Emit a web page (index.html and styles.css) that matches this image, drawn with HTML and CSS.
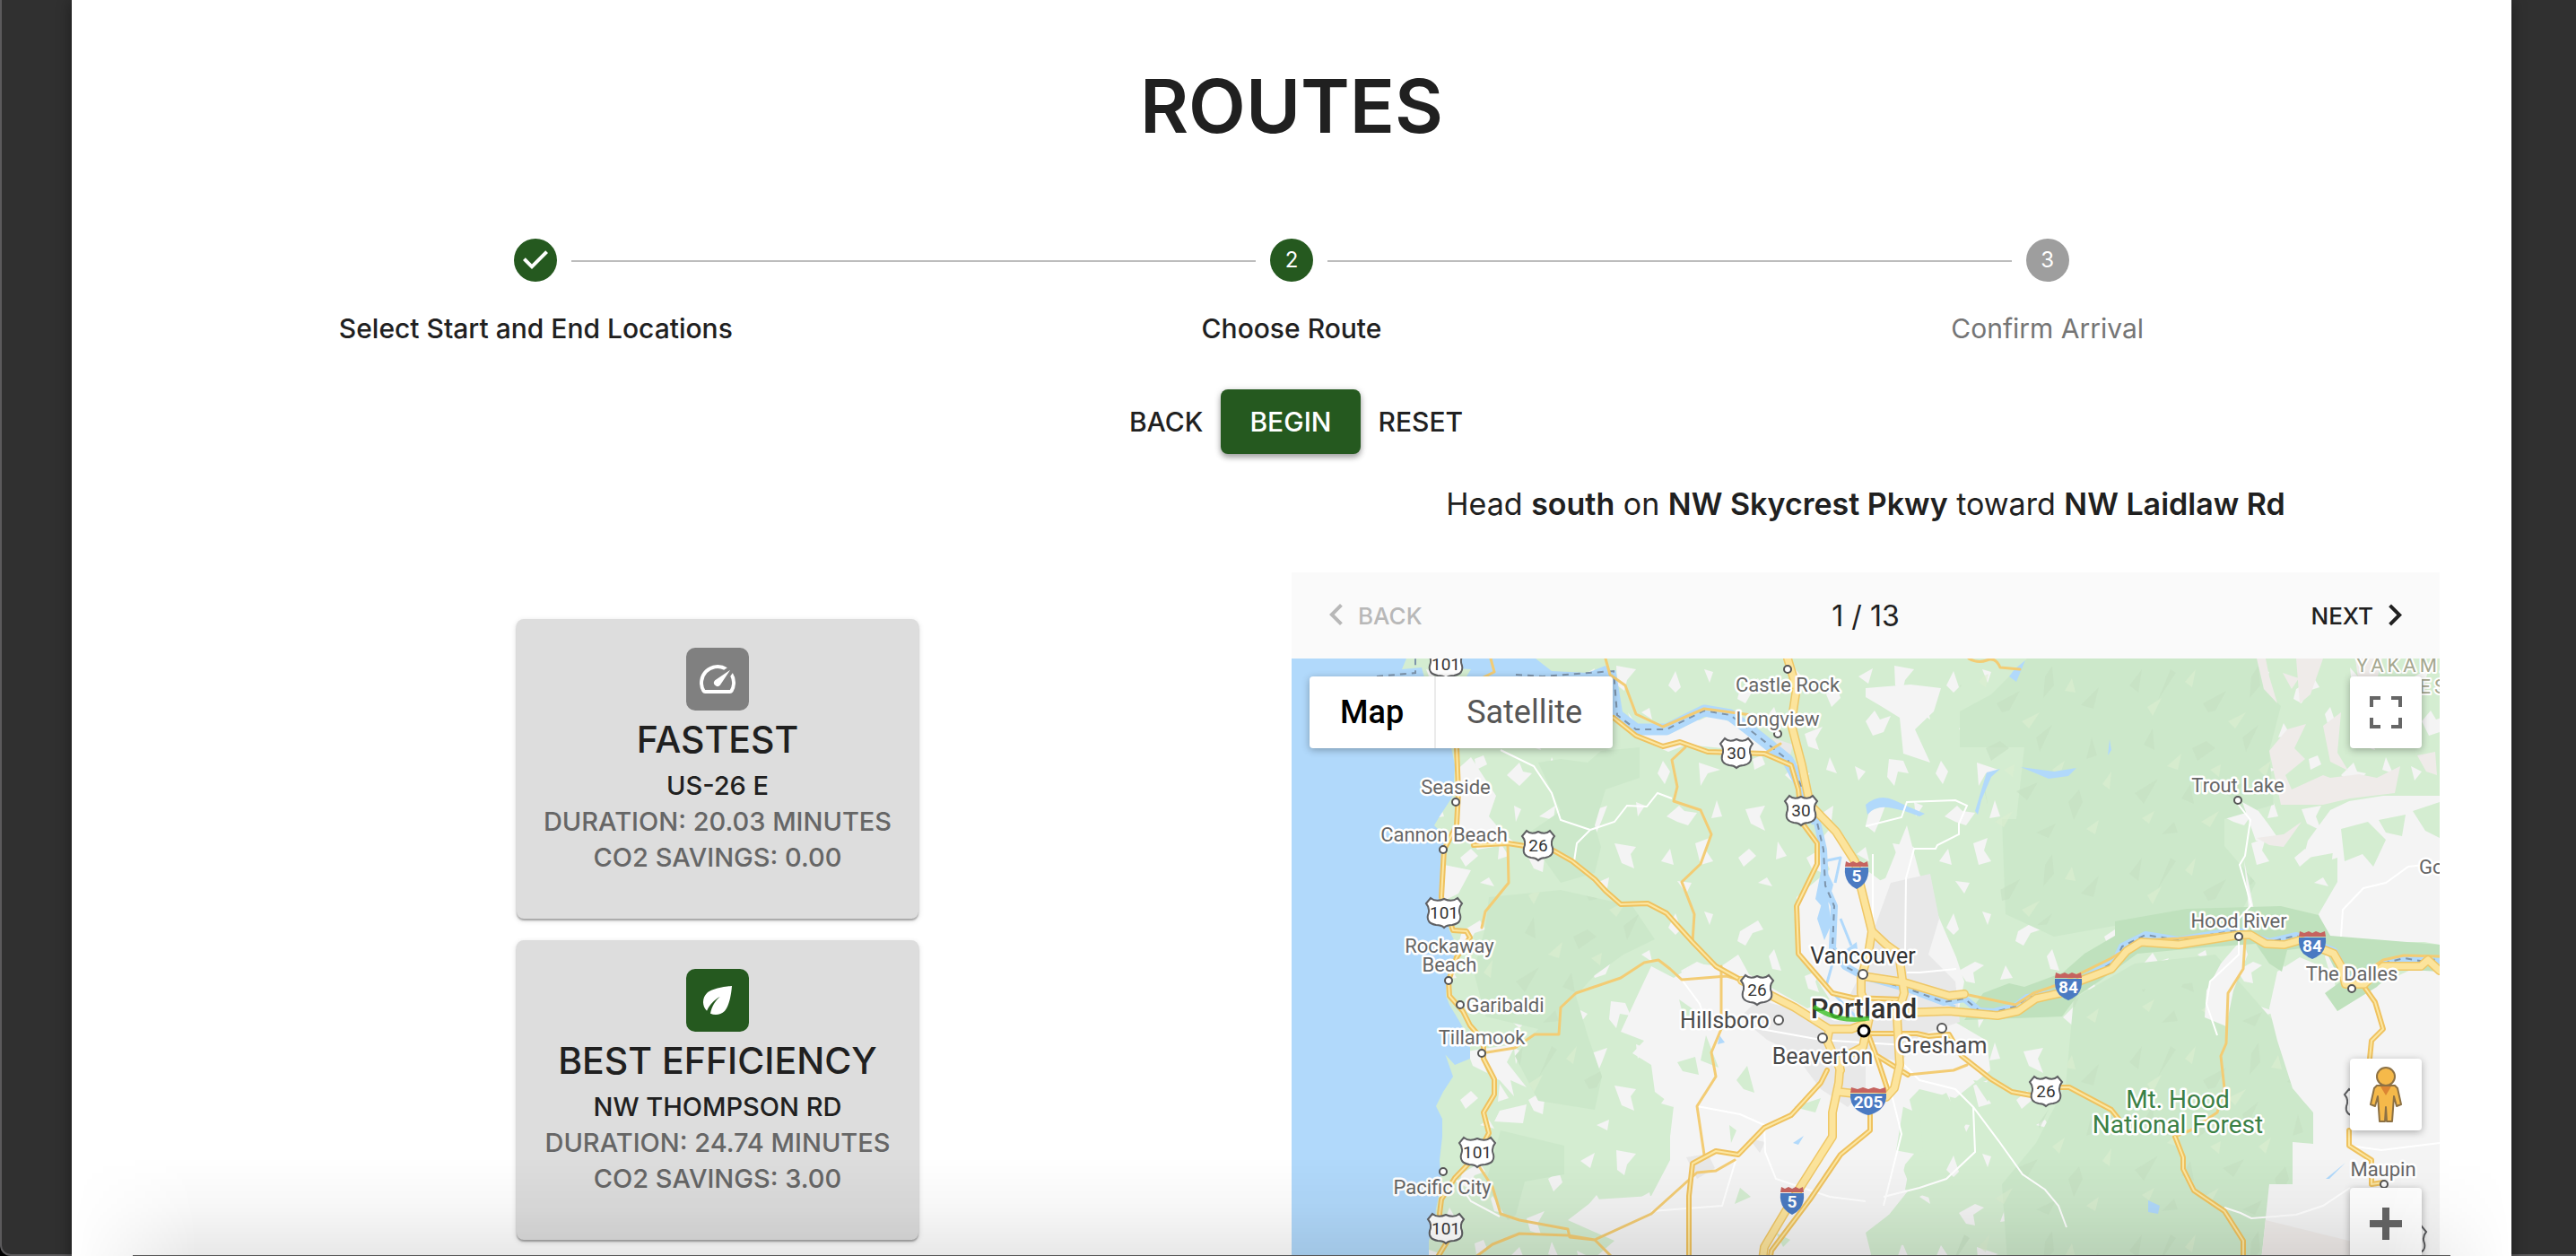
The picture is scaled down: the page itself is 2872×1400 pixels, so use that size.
FILE: index.html
```html
<!DOCTYPE html>
<html lang="en">
<head>
<meta charset="utf-8">
<meta name="viewport" content="width=device-width, initial-scale=1">
<title>Routes</title>
<link rel="stylesheet" href="styles.css">
</head>
<body>
<div class="window">
<main class="sheet">
  <h1 class="title">ROUTES</h1>

  <ol class="stepper">
    <li class="step">
      <svg class="step-icon" viewBox="0 0 24 24" aria-hidden="true"><path d="M12 0a12 12 0 1 0 0 24 12 12 0 0 0 0-24zm-2 17l-5-5 1.4-1.4 3.6 3.6 7.6-7.6L19 8l-9 9z"/></svg>
      <span class="step-label">Select Start and End Locations</span>
    </li>
    <li class="step" aria-current="step">
      <span class="step-num">2</span>
      <span class="step-label">Choose Route</span>
    </li>
    <li class="step step-next">
      <span class="step-num">3</span>
      <span class="step-label">Confirm Arrival</span>
    </li>
  </ol>

  <div class="actions">
    <button class="btn" type="button">BACK</button>
    <button class="btn btn-primary" type="button">BEGIN</button>
    <button class="btn" type="button">RESET</button>
  </div>

  <div class="content">
    <section class="routes">
      <button class="route" type="button">
        <span class="route-icon"><svg viewBox="0 0 24 24" aria-hidden="true"><path d="M20.38 8.57l-1.23 1.85a8 8 0 0 1-.22 7.58H5.07A8 8 0 0 1 15.58 6.85l1.85-1.23A10 10 0 0 0 3.35 19a2 2 0 0 0 1.72 1h13.85a2 2 0 0 0 1.74-1 10 10 0 0 0-.27-10.44zm-9.79 6.84a2 2 0 0 0 2.83 0l5.66-8.49-8.49 5.66a2 2 0 0 0 0 2.83z"/></svg></span>
        <span class="route-title">FASTEST</span>
        <span class="route-line">US-26 E</span>
        <span class="route-line route-meta">DURATION: 20.03 MINUTES</span>
        <span class="route-line route-meta">CO2 SAVINGS: 0.00</span>
      </button>
      <button class="route" type="button">
        <span class="route-icon route-icon-eco"><svg viewBox="0 0 24 24" aria-hidden="true"><path d="M6.05 8.05c-2.73 2.73-2.73 7.15-.02 9.88 1.47-3.4 4.09-6.24 7.36-7.93-2.77 2.34-4.71 5.61-5.39 9.32 2.6 1.23 5.8.78 7.95-1.37C19.43 14.47 20 4 20 4S9.53 4.57 6.05 8.05z"/></svg></span>
        <span class="route-title">BEST EFFICIENCY</span>
        <span class="route-line">NW THOMPSON RD</span>
        <span class="route-line route-meta">DURATION: 24.74 MINUTES</span>
        <span class="route-line route-meta">CO2 SAVINGS: 3.00</span>
      </button>
    </section>

    <section class="directions">
      <p class="instruction">Head <b>south</b> on <b>NW Skycrest Pkwy</b> toward <b>NW Laidlaw Rd</b></p>
      <nav class="pager">
        <button class="pager-btn" type="button" disabled><svg viewBox="0 0 24 24" aria-hidden="true"><path d="M15.41 16.09l-4.58-4.59 4.58-4.59L14 5.5l-6 6 6 6z"/></svg>BACK</button>
        <span class="pager-count">1 / 13</span>
        <button class="pager-btn pager-next" type="button">NEXT<svg viewBox="0 0 24 24" aria-hidden="true"><path d="M8.59 16.34l4.58-4.59-4.58-4.59L10 5.75l6 6-6 6z"/></svg></button>
      </nav>

      <div class="map">
        <svg class="map-canvas" viewBox="0 0 1280 700" role="img" aria-label="Map of Portland and surroundings">
          <defs>
            <pattern id="clearings" width="310" height="270" patternUnits="userSpaceOnUse">
              <g fill="#f4f4f4">
                <path d="M12 20l16-9-5 17zM52 8l22 4-10 12-3 12-8-6zM110 30l8-16 6 18-6 6zM150 12l10 3-4 12zM190 34l20-12 6 10-12 4-8 14-9-5zM250 10l14 16-12 4zM286 40l12-8 4 12-10 10z"/>
                <path d="M20 70l10-12 6 10 12-4-8 18-12 4zM80 60l9-5 3 13zM124 78l18-10 10 4-12 8 2 12-10-2zM176 72l8 14-14 2zM222 62l6-8 8 24-10-2zM262 84l20-8-8 14 4 12-12-4z"/>
                <path d="M8 120l12 6-8 10zM46 112l16 2 6 14-12-2-4 16-8-10zM98 128l6-14 8 12-6 14zM144 116l24 8-14 4-8 14zM204 112l10-4 4 10-12 6zM240 130l14-14 4 10 10 2-14 14zM290 110l8 18-12-4z"/>
                <path d="M24 170l18-6-6 16-6 14-10-8zM74 160l10 4-8 12zM108 176l14-12 6 6 14 2-10 14-12-4zM164 158l6 18-12 2zM196 168l22-4-6 12 6 16-16-8zM248 164l8 4-6 14zM276 176l18-12-2 16z"/>
                <path d="M10 218l10-8 4 16zM50 206l24 4-6 8 4 16-14-6zM102 226l10-14 4 18zM140 206l16-6-4 14 8 12-14 4zM188 222l12-10 8 8-14 12zM232 204l10 16-12 4zM264 222l20-12 8 8-10 4-2 16-10-4zM30 250l14-6-2 12zM120 248l16 2-6 12zM210 250l10-6 6 10z"/>
              </g>
            </pattern>
            <pattern id="relief" width="230" height="210" patternUnits="userSpaceOnUse">
              <path fill="#c5e0c2" opacity=".6" d="M14 30l14-18-4 26zM60 12l6 4-20 30zM96 50l26-14-12 22-8 2zM150 20l8-12 2 22-12 14zM190 52l20-20-6 24zM30 96l10-18 2 24zM84 100l16-8 10 8-20 14zM140 88l18-14-14 30zM196 112l6-24 6 20zM20 150l26-16-16 28zM72 156l10-16 4 22zM118 148l24-10-12 20zM176 160l12-14 4 14-10 20zM50 196l14-14 4 12zM140 194l22-10-8 16z"/>
              <path fill="#dcefd0" opacity=".6" d="M34 54l16-10-10 20zM76 26l12-14-4 20zM124 70l20-10-12 18zM172 36l8-14 4 16zM56 120l16-14-4 18zM104 124l12-6-2 14zM158 124l14-10-6 18zM214 140l10-14-2 20zM28 178l14-8-6 14zM94 182l20-12-10 18zM196 190l14-10-4 16z"/>
            </pattern>
            <g id="us-shield"><path d="M-13-16Q-8-11 0-15Q8-11 13-16L18-10Q13-4 16 3Q18 12 8 14Q3 14 0 17Q-3 14-8 14Q-18 12-16 3Q-13-4-18-10Z" fill="#fff" stroke="#5f6063" stroke-width="2"/></g>
            <g id="us-shield-wide"><path d="M-15-16Q-9-11 0-15Q9-11 15-16L20-10Q15-4 18 3Q20 12 9 14Q3 14 0 17Q-3 14-9 14Q-20 12-18 3Q-15-4-20-10Z" fill="#fff" stroke="#5f6063" stroke-width="2"/></g>
            <g id="interstate"><path d="M-12-15l4 2 4-2 4 2 4-2 4 2 4-2 1 6h-26z" fill="#c5635f"/><path d="M-13-8h26Q14 2 9 9Q5 14 0 16Q-5 14-9 9Q-14 2-13-8Z" fill="#4a7ac2"/></g>
            <g id="interstate-wide"><path d="M-14-15l5 2 5-2 4 2 4-2 5 2 5-2 1 6h-30z" fill="#c5635f"/><path d="M-15-8h30Q16 3 10 10Q5 14 0 16Q-5 14-10 10Q-16 3-15-8Z" fill="#4a7ac2"/></g>
            <g id="interstate-xwide"><path d="M-19-15l7 2 6-2 6 2 6-2 7 2 6-2 1 6h-40z" fill="#c5635f"/><path d="M-20-8h40Q21 3 13 10Q6 15 0 16Q-6 15-13 10Q-21 3-20-8Z" fill="#4a7ac2"/></g>
            <g id="roads-major">
              <path d="M553 0L563 33 557 73 569 119 578 163 607 193 628 226 635 256 647 304 643 329 635 356 635 373 645 396 637 433 612 446 610 473 603 506 603 533 561 599 527 656 521 700"/>
              <path d="M647 304L663 319 677 329 683 373 675 399 678 453 672 479 663 489 610 483"/>
              <path d="M643 396L707 394 733 393 787 398 810 393 830 379 857 373 880 359 914 346 931 326 947 316 989 319 1057 308 1069 308 1086 318 1107 319 1124 314 1162 329 1170 343 1175 363 1196 363 1217 343 1259 343 1267 336 1280 348"/>
              <path d="M637 354L683 361 733 376 750 374M502 359L561 389 599 413 624 413 637 408M599 416L597 426 612 459"/>
            </g>
            <g id="roads-mid">
              <path d="M203 208L241 206 292 214 313 226 338 246 350 259 367 274 397 273 418 284 447 316 473 343 502 359"/>
              <path d="M643 418L697 418 710 421 733 419 747 443 780 469 803 483 830 488M855 478L867 478 914 503 922 513M985 533L994 556 994 569 1006 593 1040 616 1061 649 1061 700"/>
              <path d="M1196 366L1208 383 1217 413 1204 426 1202 446M1179 526L1179 543 1204 559 1204 586 1217 584"/>
              <path d="M184 99L186 149 184 186 170 213 167 266 180 303 195 304 199 311 184 333 175 359 176 376 191 393 199 409 214 426 214 446 226 469 226 486 214 506 220 529 207 553 182 579 167 603 165 619 174 649 160 672"/>
              <path d="M359 66L384 86 414 98 433 93 464 104 527 106 557 119 565 146 569 183 586 206 586 229 563 276 565 329 603 373 625 378 680 380"/>
              <path d="M597 459L590 473 557 509 527 523 498 553 473 549 447 563 443 599 443 700M645 509L645 526 612 553 578 603 535 660 528 700M643 419L653 446 665 482M653 443L687 464"/>
            </g>
            <g id="roads-minor">
              <path d="M218 439L249 434 271 419 298 419 300 389 317 373 367 356 393 339 409 336 422 346 435 358 485 354 502 359"/>
              <path d="M439 99L424 113 430 143 426 159 456 169 468 196 456 229 435 249 449 285 447 316M479 343L479 413 468 439 473 466 452 499 460 553"/>
              <path d="M494 559L473 571 452 573 401 619 338 648 308 643 254 641 224 653 204 668M207 563L224 589 233 619 254 626 308 636 310 645 338 648 370 680"/>
              <path d="M1063 313L1061 346 1044 373 1042 429 1036 443 1040 479 1032 506 1002 526 985 533M750 374L807 386 827 373 853 364 914 334 947 314 989 312 1045 306M1196 350L1217 336 1240 331 1280 332"/>
              <path d="M687 464L738 459 753 453M241 206L242 250 216 282 212 300M350 0L355 18 372 30 384 62 414 76 460 56 520 64M222 0L226 15 200 28M545 95L527 106"/>
              <path d="M755 0Q765 6 775 2T790 10L812 12"/>
            </g>
          </defs>

          <rect width="1280" height="700" fill="#d4edd1"/>
          <rect width="1280" height="700" fill="url(#clearings)"/>

          <g fill="#cce8ca">
            <path d="M275 116L300 112 330 116 345 103 388 99 388 133 350 146 338 186 345 210 338 239 300 250 282 225 262 196 300 170z"/>
            <path d="M220 266L300 258 380 276 405 313 370 330 338 353 317 376 330 420 346 466 338 503 275 493 249 443 275 413 216 399 203 349 216 299z"/>
            <path d="M233 526L304 543 304 575 260 583 250 620 241 626 216 586z"/>
            <path d="M820 0L1078 0 1084 34 1103 53 1090 103 1095 163 1040 179 1040 209 1075 250 1060 280 990 285 850 310 796 285 792 179 808 179 817 99 745 99 745 59 780 40z"/>
            <path d="M872 379L940 340 1030 330 1099 409 1116 479 1139 506 1139 541 1116 539 1116 586 1090 586 1078 700 800 700 792 586 830 540 863 476z"/>
          </g>
          <g fill="url(#relief)">
            <path d="M220 266L300 258 380 276 405 313 338 353 317 376 346 466 338 503 275 493 249 443 203 349z"/>
            <path d="M745 30L820 0 1078 0 1103 53 1095 163 1040 209 1075 250 990 285 796 300 780 180z"/>
            <path d="M872 379L1099 349 1116 479 1139 541 1078 700 700 700 760 620 863 476z"/>
          </g>

          <g fill="#f4f4f4">
            <path d="M563 266L600 235 586 206 600 190 628 226 660 250 686 186 700 240 712 266 741 333 750 360 741 406 775 426 779 459 740 490 700 480 682 499 674 549 690 590 650 640 640 700 350 700 338 668 360 649 308 626 338 603 401 599 422 559 422 533 426 499 405 483 401 453 380 440 393 426 367 416 384 379 401 343 426 356 450 340 479 343 498 330 510 352 540 370 575 390 600 380 565 326z"/>
            <path d="M182 126L200 110 228 153 220 176 237 196 250 206 207 213 186 186z"/>
            <path d="M640 33L690 29 724 33 716 59 695 79 712 116 682 106 678 66 657 53 640 43zM375 60L384 88 420 104 440 96 520 104 550 118 552 100 500 76 470 62 420 84 390 82z"/>
            <path d="M170 230L200 236 186 262 170 270zM214 435L250 430 240 450 262 478 244 470 248 488 232 470 222 466zM232 504L262 497 258 518 226 516z"/>
            <path d="M1217 153L1179 159 1158 169 1133 203 1128 223 1166 216 1166 249 1145 285 1152 316 1263 316 1280 319 1280 153z"/>
            <path d="M1099 426L1090 390 1099 349 1124 333 1162 349 1166 393 1213 363 1250 346 1280 349 1280 700 1078 700 1090 586 1116 586 1116 539 1139 541 1139 506 1116 479z"/>
            <path d="M1036 340L1020 370 1018 400 1042 410 1050 370 1066 330 1060 312zM1060 160L1075 203 1103 205 1090 186 1078 170zM1062 225l12 60-6 4z"/>
          </g>
          <g fill="#efebe9">
            <path d="M1076 0L1084 34 1099 50 1090 20 1086 0zM1105 16l18 6-8 12zM1120 0h30l-14 40-12 10zM1186 0h30l-10 40-16-10zM1110 79L1131 73 1118 100 1130 112 1108 130 1115 146 1150 130 1158 133 1190 129 1210 133 1236 120 1230 150 1180 156 1150 163 1103 163 1090 103zM1150 75l20-15-4 45 12 20-20-10zM1076 200l30-4 20-14-20 28-16-2zM1255 108l20-4 2 26-12-4z"/>
            <path d="M1086 626L1179 649 1230 656 1230 700 1078 700z"/>
          </g>
          <g fill="#d4edd1">
            <path d="M1170 190l30-8 20 20-14 30-12-14-20 8zM1212 180l30-6-4 24-18-4zM1250 170l30-10v40l-16-8z"/>
            <path d="M700 500l30-16 10 20 24-6-14 24 10 26-24-4-16 24-16-20zM760 470l26 4-10 20zM690 560l26-10 8 24 20 8-30 20-30-10zM640 640l26-20 20 16-10 30-28 6zM560 500l30-10-6 16z"/>
            <path d="M432 380l20 14-14 10zM462 420l14 36-20-8zM430 450l20-6 4 20-18-4zM496 470l12-16 8 30-12-4zM500 590l12 10-18 8zM488 520l8 6-6 14zM540 640l16 8-8 8z"/>
          </g>
          <path fill="#bfe1bd" d="M750 403L771 373 800 362 817 366 860 350 884 329 918 309 918 293 998 279 1103 276 1145 286 1158 309 1280 319 1280 349 1230 346 1210 366 1166 393 1152 373 1170 360 1150 320 1110 325 1104 349 1090 340 1075 318 1019 322 943 329 900 360 876 376 859 399z"/>
          <g fill="#e8e8e8">
            <path d="M668 250L712 240 722 290 710 330 740 360 745 405 700 420 680 450 640 440 640 480 620 500 590 480 560 440 530 425 500 400 520 380 590 400 620 380 640 340 650 300z"/>
            <path d="M440 556l24-4 8 16-20 12zM535 88l24 8-4 16zM510 535l18 4-6 12z"/>
          </g>

          <g fill="#b1d9fb">
            <path d="M0 0H128L123 12 145 10 150 28 178 40 178 99 182 119 180 153 165 176 159 186 169 196 170 219 167 266 176 303 182 316 181 336 173 359 172 376 176 386 188 406 199 426 199 446 182 453 170 440 166 426 180 466 169 483 161 499 168 513 168 533 165 559 167 586 161 613 159 633 153 649 153 700H0z"/>
            <path d="M160 0L165 10 200 12 190 28 240 30 320 26 359 19 350 8 330 16 290 14 272 0z"/>
            <path d="M800 20l6-8 12-10-10 24zM640 163Q655 150 672 158T706 173L700 176Q680 168 665 166T642 174zM762 170L775 127 790 123 780 132 769 158 765 174zM813 121L850 126 875 122 866 131 844 134zM912 90l2 12-4 6z"/>
            <path d="M592 228l12 24-8 30-12-14zM586 290l10-34 6 40-8 18zM616 326l14-10 2 18zM955 604l13 6-2 9-11-2zM1153 580l22-18-18 18zM477 420l6 8-8 2zM559 540l12-8-6 10z"/>
          </g>
          <g fill="none" stroke="#b1d9fb" stroke-linejoin="round">
            <path stroke-width="13" d="M355 14L363 63 384 79 418 79 460 58 489 63 523 89 553 113 574 153 586 183"/>
            <path stroke-width="8" d="M586 183L593 213 595 253 605 276 603 323 617 343 637 354 690 369 727 383 750 379 767 393 783 394 807 388 820 378 851 373 884 356 918 338 926 321 952 308 989 314 1053 303 1090 316 1120 309 1162 326 1178 356M1217 340L1240 334 1280 338"/>
            <path stroke-width="3" d="M593 226L612 222 606 250M603 340L596 365 620 390 640 410 640 440M612 290L624 320M700 372L740 388"/>
          </g>
          <g class="border-line">
            <path d="M95 20L138 16 138 0M250 18L280 20 359 14 363 63 384 79 418 79 460 58 489 63 523 89 553 113 574 153 586 183 593 213 595 253 605 276 603 323 617 343 637 354 690 369 727 383 750 379 767 393 783 394 807 388 820 378 851 373 884 356 918 338 926 321 952 308 989 314 1053 303 1090 316 1120 309 1162 326 1178 350M1217 340L1240 334 1265 338 1280 334"/>
          </g>

          <g fill="none" stroke="#fff" stroke-width="2">
            <path d="M233 102L270 120 290 150 300 180 333 191 318 206 315 226M333 191L360 182 374 164 396 165 408 150 424 156"/>
            <path d="M640 187L680 177 686 160 740 158 753 164 744 184 744 196 720 208 718 212 694 212 685 245 684 330M686 350L700 350 741 346"/>
            <path d="M1055 162L1069 180 1063 220 1057 230 1070 275 1056 290 1056 330 1024 360 1020 385 1032 420M1280 228L1245 232 1220 250 1195 256 1172 280 1170 310"/>
            <path d="M680 450L700 470 740 480 760 500 790 540 815 575 840 592 855 610 864 634M760 500L762 550 730 580 700 590 660 600M665 470L680 530 660 610"/>
            <path d="M1040 612L1058 618 1070 624 1120 620 1150 610 1180 590M1179 543L1215 548 1280 540M452 499L500 508 527 520 528 550 540 580 600 600 640 605M401 616L480 610 495 560"/>
            <path d="M435 358L455 385 460 400M479 405L590 425 700 432M182 579L200 605 232 622M648 218L648 300"/>
          </g>

          <g fill="none" stroke-linejoin="round" stroke-linecap="round">
            <use href="#roads-minor" stroke="#f3cc74" stroke-width="3"/>
            <use href="#roads-mid" stroke="#efc25f" stroke-width="6"/>
            <use href="#roads-mid" stroke="#fce7a2" stroke-width="2"/>
            <use href="#roads-major" stroke="#efc766" stroke-width="10"/>
            <use href="#roads-major" stroke="#fce49c" stroke-width="7"/>
          </g>

          <g class="shields">
            <use href="#us-shield-wide" x="172" y="5"/><text x="172" y="13">101</text>
            <use href="#us-shield" x="496" y="105"/><text x="496" y="112">30</text>
            <use href="#us-shield" x="568" y="169"/><text x="568" y="176">30</text>
            <use href="#us-shield" x="275" y="208"/><text x="275" y="215">26</text>
            <use href="#us-shield-wide" x="170" y="283"/><text x="170" y="290">101</text>
            <use href="#us-shield" x="519" y="369"/><text x="519" y="376">26</text>
            <use href="#us-shield-wide" x="207" y="550"/><text x="207" y="557">101</text>
            <use href="#us-shield-wide" x="172" y="635"/><text x="172" y="642">101</text>
            <use href="#us-shield" x="841" y="482"/><text x="841" y="489">26</text>
            <use href="#us-shield-wide" x="1194" y="496"/>
            <use href="#us-shield" x="1247" y="649"/>
          </g>
          <g class="interstates">
            <use href="#interstate" x="630" y="241"/><text x="630" y="249">5</text>
            <use href="#interstate" x="558" y="604"/><text x="558" y="612">5</text>
            <use href="#interstate-wide" x="866" y="365"/><text x="866" y="373">84</text>
            <use href="#interstate-wide" x="1138" y="319"/><text x="1138" y="327">84</text>
            <use href="#interstate-xwide" x="643" y="493"/><text x="643" y="501">205</text>
          </g>

          <g class="dots">
            <circle cx="553" cy="12" r="4"/><circle cx="542" cy="84" r="4"/><circle cx="183" cy="160" r="4"/><circle cx="169" cy="213" r="4"/>
            <circle cx="175" cy="359" r="4"/><circle cx="188" cy="386" r="4"/><circle cx="212" cy="440" r="4"/><circle cx="169" cy="572" r="4"/>
            <circle cx="1055" cy="158" r="4"/><circle cx="1056" cy="310" r="4"/><circle cx="1182" cy="368" r="4"/><circle cx="1218" cy="586" r="4"/>
            <circle cx="543" cy="403" r="5"/><circle cx="592" cy="423" r="5"/><circle cx="725" cy="412" r="5"/><circle cx="637" cy="352" r="5"/>
            <circle class="dot-main" cx="638" cy="415" r="6"/>
          </g>
          <g class="towns">
            <text x="553" y="37">Castle Rock</text>
            <text x="542" y="75">Longview</text>
            <text x="183" y="151">Seaside</text>
            <text x="170" y="204">Cannon Beach</text>
            <text x="176" y="328">Rockaway</text>
            <text x="176" y="349">Beach</text>
            <text x="238" y="394">Garibaldi</text>
            <text x="212" y="430">Tillamook</text>
            <text x="168" y="597">Pacific City</text>
            <text x="1055" y="149">Trout Lake</text>
            <text x="1056" y="300">Hood River</text>
            <text x="1182" y="359">The Dalles</text>
            <text x="1217" y="577">Maupin</text>
            <text class="from-start" x="1257" y="240">Goldendale</text>
          </g>
          <g class="cities">
            <text x="483" y="412">Hillsboro</text>
            <text x="592" y="452">Beaverton</text>
            <text x="725" y="440">Gresham</text>
            <text class="city-dark" x="637" y="340">Vancouver</text>
            <text class="city-main" x="638" y="401">Portland</text>
          </g>
          <g class="forest">
            <text x="988" y="501">Mt. Hood</text>
            <text x="988" y="529">National Forest</text>
          </g>
          <g class="region">
            <text x="1187" y="15">YAKAMA</text>
            <text x="1240" y="39">RESERVATION</text>
          </g>
          <path d="M582 388Q610 407 644 401" fill="none" stroke="#3cbf26" stroke-opacity=".8" stroke-width="5"/>
        </svg>

        <div class="map-types">
          <button class="map-type map-type-on" type="button">Map</button>
          <button class="map-type" type="button">Satellite</button>
        </div>
        <button class="map-btn map-full" type="button" aria-label="Toggle fullscreen"><svg viewBox="0 0 18 18" width="36" height="36"><path d="M0 0v6h2V2h4V0zm16 0h-4v2h4v4h2V0zm0 16h-4v2h6v-6h-2zM2 12H0v6h6v-2H2z"/></svg></button>
        <div class="map-tools">
          <button class="map-btn" type="button" aria-label="Street View"><svg viewBox="0 0 36 62" width="36" height="62"><g stroke="#8d7144" stroke-width="2" stroke-linejoin="round" fill="#f5b94a"><path d="M8 21h20l3 3 4 18-5 2-3-11-2 28h-6l-1-16-1 16h-6L9 33 6 44l-5-2 4-18z"/><circle cx="18" cy="11" r="10"/></g><path d="M12 22h12l-6 10z" fill="#dc8533"/></svg></button>
          <button class="map-btn" type="button" aria-label="Zoom in"><svg viewBox="0 0 18 18" width="36" height="36"><path d="M18 7h-7V0H7v7H0v4h7v7h4v-7h7z"/></svg></button>
        </div>
      </div>
    </section>
  </div>
</main>
<div class="bottom-shade"></div>
<div class="bottom-line"></div>
</div>
</body>
</html>
```
FILE: styles.css
```css
* { box-sizing: border-box; }

body {
  margin: 0;
  background: #000;
  color: #202020;
  font-family: Inter, "Open Sans", sans-serif;
  font-size: 30px;
}

button {
  border: 0;
  padding: 0;
  background: none;
  color: inherit;
  font: inherit;
  cursor: pointer;
}

.window {
  position: relative;
  height: 100vh;
  overflow: hidden;
  padding: 0 72px 0 80px;
  background: #303030;
  border-radius: 0 0 0 12px;
}

/* thin frame round the window, behind the sheet */
.window::before {
  content: "";
  position: absolute;
  inset: 0;
  border: 2px solid #5b5a5c;
  border-width: 0 0 2px 2px;
  border-radius: 0 0 0 12px;
}

.sheet {
  position: relative;
  padding: 70px 80px 80px;
  background: #fff;
  box-shadow: 0 2px 16px rgba(0, 0, 0, .4);
}

.title {
  margin: 0 0 100px;
  font-size: 83px;
  font-weight: 600;
  line-height: 96px;
  text-align: center;
}

.stepper {
  display: grid;
  grid-template-columns: repeat(3, 1fr);
  margin: 0;
  padding: 0 16px 48px;
  list-style: none;
}

.step {
  position: relative;
  display: flex;
  flex-direction: column;
  align-items: center;
  gap: 32px;
  font-weight: 500;
  line-height: 40px;
}

.step + .step::before {
  content: "";
  position: absolute;
  top: 24px;
  left: calc(-50% + 40px);
  right: calc(50% + 40px);
  height: 2px;
  background: #bdbdbd;
}

.step-icon,
.step-num {
  width: 48px;
  height: 48px;
}

.step-icon { fill: #25591f; }

.step-num {
  border-radius: 50%;
  background: #25591f;
  color: #fff;
  font-size: 24px;
  font-weight: 400;
  line-height: 48px;
  text-align: center;
}

.step-next { font-weight: 400; }
.step-next .step-num { background: #9e9e9e; }
.step-next .step-label { color: #757575; }

.actions {
  display: flex;
  justify-content: center;
  padding-left: 10px;
}

.btn {
  height: 72px;
  padding: 0 20px;
  font-weight: 500;
}

.btn-primary {
  padding: 0 32px;
  border-radius: 8px;
  background: #25591f;
  color: #fff;
  box-shadow: 0 4px 6px rgba(0, 0, 0, .3), 0 1px 8px rgba(0, 0, 0, .15);
}

.content {
  display: grid;
  grid-template-columns: 1fr 1fr;
  padding-top: 16px;
}

.routes {
  display: flex;
  flex-direction: column;
  align-items: center;
  gap: 24px;
  padding-top: 168px;
}

.route {
  display: flex;
  flex-direction: column;
  align-items: center;
  width: 448px;
  padding: 32px 16px 48px;
  border-radius: 8px;
  background: #ddd;
  font-size: 29px;
  font-weight: 500;
  box-shadow: 0 2px 2px rgba(0, 0, 0, .3), 0 2px 6px rgba(0, 0, 0, .15);
}

.route-icon {
  display: grid;
  place-items: center;
  width: 70px;
  height: 70px;
  border-radius: 10px;
  background: #808080;
}

.route-icon svg {
  width: 48px;
  height: 48px;
  fill: #fff;
}

.route-icon-eco { background: #25591f; }

.route-title {
  font-size: 41px;
  line-height: 64px;
}

.route-line { line-height: 40px; white-space: nowrap; }
.route-meta { color: #666; }

.instruction {
  margin: 0;
  padding: 16px 0 52px;
  font-size: 34px;
  line-height: 48px;
  text-align: center;
}

.instruction b { font-weight: 600; }

.pager {
  display: grid;
  grid-template-columns: 1fr auto 1fr;
  align-items: center;
  height: 96px;
  padding: 0 26px;
  background: #fafafa;
}

.pager-btn {
  display: flex;
  align-items: center;
  font-size: 26px;
  font-weight: 500;
}

.pager-btn:disabled { color: #b8b8b8; }
.pager-next { justify-self: end; }

.pager-btn svg {
  width: 48px;
  height: 48px;
  fill: currentColor;
}

.pager-count { font-size: 32px; }

.map {
  position: relative;
  overflow: hidden;
  font-family: Roboto, "Liberation Sans", sans-serif;
}

.map-canvas {
  display: block;
  width: 100%;
}

.border-line {
  fill: none;
  stroke: #7d94ab;
  stroke-width: 2;
  stroke-dasharray: 7 6;
}

.map-canvas text {
  text-anchor: middle;
  paint-order: stroke;
  stroke: #fff;
  stroke-linejoin: round;
}

.map-canvas .shields text {
  fill: #333;
  stroke: none;
  font-size: 19px;
}

.map-canvas .interstates text {
  fill: #fff;
  stroke: none;
  font-size: 19px;
  font-weight: 700;
}

.dots {
  fill: #fff;
  stroke: #555;
  stroke-width: 2;
}

.dot-main {
  stroke: #000;
  stroke-width: 3;
}

.map-canvas .towns {
  fill: #666;
  font-size: 22px;
  stroke-width: 5;
}

.map-canvas .cities {
  fill: #4a4a4a;
  font-size: 25px;
  stroke-width: 5;
}

.map-canvas .city-dark { fill: #333; }

.map-canvas .city-main {
  fill: #333;
  font-size: 31px;
  font-weight: 500;
}

.map-canvas .forest {
  fill: #3b8045;
  font-size: 28px;
  stroke-width: 5;
}

.map-canvas .region {
  fill: #a5a78f;
  font-size: 22px;
  letter-spacing: 4px;
  stroke-width: 4;
}

.map-canvas .from-start,
.map-canvas .region text { text-anchor: start; }

.map-types,
.map-btn {
  border-radius: 4px;
  background: #fff;
  box-shadow: 0 2px 8px rgba(0, 0, 0, .3);
}

.map-types {
  position: absolute;
  top: 20px;
  left: 20px;
  display: flex;
}

.map-type {
  height: 80px;
  padding: 0 34px;
  color: #565656;
  font-size: 36px;
}

.map-type-on {
  border-right: 2px solid #ebebeb;
  color: #000;
  font-weight: 500;
}

.map-btn {
  display: grid;
  place-items: center;
  width: 80px;
  height: 80px;
  fill: #666;
}

.map-full {
  position: absolute;
  top: 20px;
  right: 20px;
}

.map-tools {
  position: absolute;
  top: 446px;
  right: 20px;
  display: grid;
  gap: 64px;
}

.bottom-shade {
  position: absolute;
  right: 72px;
  bottom: 0;
  left: 80px;
  height: 110px;
  background: linear-gradient(to bottom, rgba(0, 0, 0, 0), rgba(0, 0, 0, .03) 50%, rgba(0, 0, 0, .09));
  -webkit-mask-image: linear-gradient(to right, transparent, #000 140px, #000 calc(100% - 140px), transparent);
  mask-image: linear-gradient(to right, transparent, #000 140px, #000 calc(100% - 140px), transparent);
  pointer-events: none;
}

.bottom-line {
  position: absolute;
  right: 140px;
  bottom: 0;
  left: 148px;
  height: 1px;
  background: #555;
}
```
